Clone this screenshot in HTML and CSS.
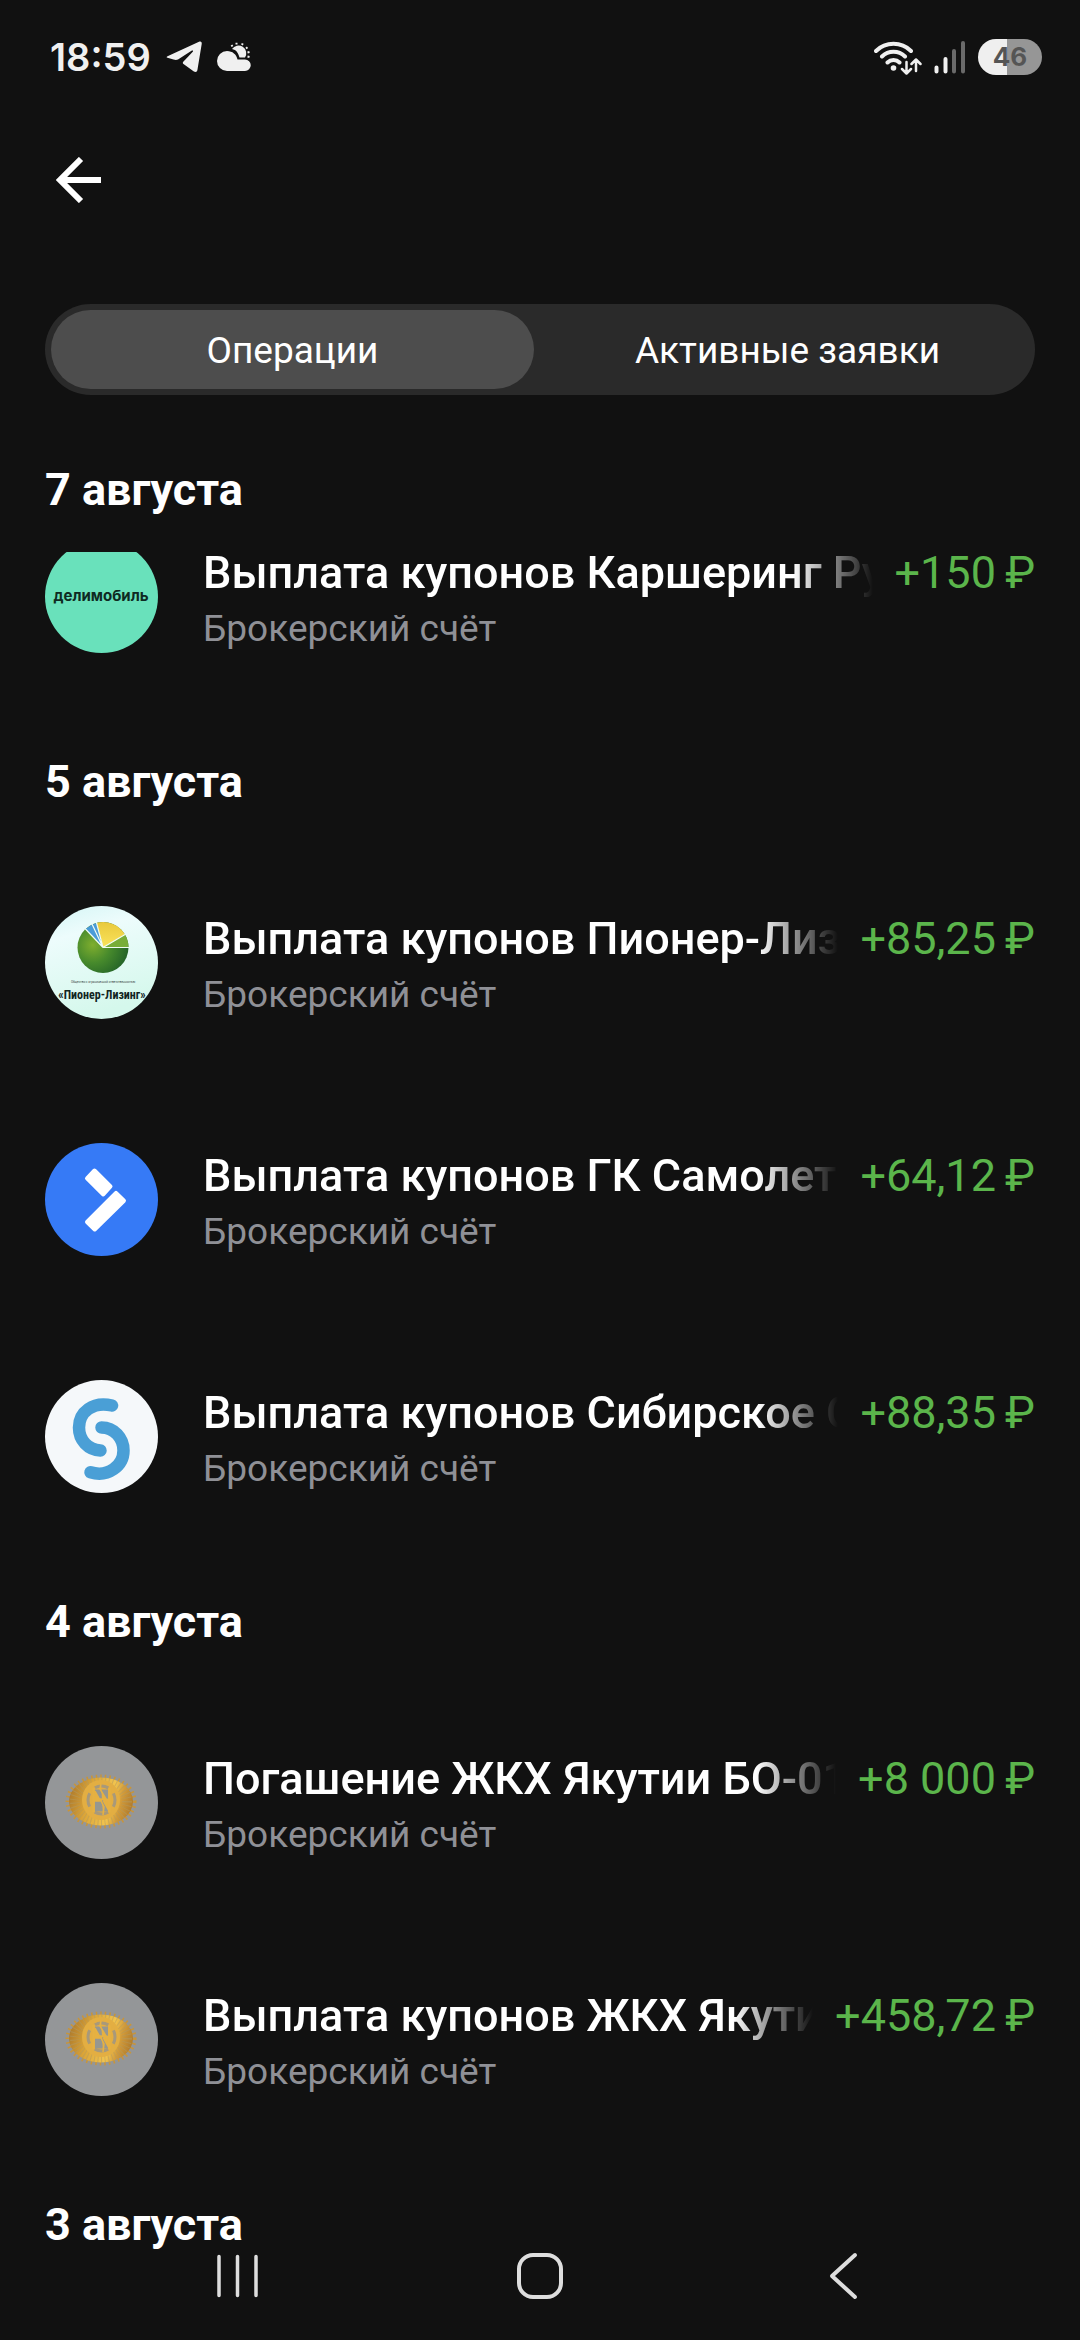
FILE: index.html
```html
<!DOCTYPE html>
<html lang="ru">
<head>
	<meta charset="utf-8">
	<meta name="viewport" content="width=device-width, initial-scale=1">
	<title>Операции</title>
	<link rel="stylesheet" href="styles.css">
</head>
<body>

	<!-- shared logo, used by two rows -->
	<svg class="defs" width="0" height="0" aria-hidden="true">
		<defs>
			<linearGradient id="gold" x1="0" y1="0.4" x2="1" y2="0.6">
				<stop offset="0" stop-color="#b07c2c"/>
				<stop offset="0.3" stop-color="#dba538"/>
				<stop offset="0.65" stop-color="#f2c44e"/>
				<stop offset="0.8" stop-color="#d29b3a"/>
				<stop offset="1" stop-color="#b07a2a"/>
			</linearGradient>
			<symbol id="logo-gkh" viewBox="0 0 113 113">
				<circle cx="56.5" cy="56.5" r="56.5" fill="#949698"/>
				<ellipse cx="56" cy="55.500" rx="33" ry="24.500" fill="none" stroke="#c8953a" stroke-width="5" stroke-dasharray="1.5 3"/>
				<ellipse cx="56" cy="55.500" rx="32" ry="24" fill="url(#gold)"/>
				<ellipse cx="56" cy="55.500" rx="26" ry="20" fill="none" stroke="#b29a62" stroke-width="10" stroke-dasharray="1 2.500" opacity="0.5"/>
				<ellipse cx="56" cy="54" rx="19" ry="20" fill="#e3ae42"/>
				<ellipse cx="56.500" cy="54" rx="13.500" ry="14" fill="none" stroke="#a8997a" stroke-width="3" stroke-dasharray="14 7.500" stroke-dashoffset="7"/>
				<path d="M50 43.500h13v22H50z" fill="#969790"/>
				<path d="M56 37.500 55 43l6 10 3 1-9-1 4 8-1 8M50 55h5.500l-5.500-10zM63.500 54v10l-5-9z" fill="#e6b142" stroke="#e6b142" stroke-width="1.500"/>
				<path d="M48.500 42v24M64.500 42v24" fill="none" stroke="#e6b142" stroke-width="2"/>
			</symbol>
		</defs>
	</svg>

	<div class="status-bar">
		<div class="status-left">
			<span class="clock">18:59</span>
			<svg width="36" height="32" viewBox="0 0 36 32" aria-hidden="true">
				<path d="M1.500 15.200 33 .8C35 0 36 1 35.700 3L31.500 28.500C31 31.300 29.500 31.500 27.500 30.300L17.500 23C16.500 22.200 16.700 21.300 17.500 20.500L27 10.500C27.500 9.500 26.500 9.200 25.500 9.800L12 18.500C10.500 19.200 9 19 7.500 18.500L1.500 16.800C.3 16.400.4 15.700 1.500 15.200z" fill="#f0f0f0"/>
			</svg>
			<svg width="34" height="30" viewBox="0 0 34 30" aria-hidden="true">
				<path d="M15 7a7.500 7.500 0 0 1 13 8.500h-5.500C21 10.500 19.500 8 15 7z" fill="#f0f0f0"/>
				<path d="M15.500 4.500l-1-1.500M19.500 2.500V.8M25 3l.7-1.600M29 6.500l1.500-1.200M30.500 10.500l2-.5M30.500 14.500l2 .5" stroke="#f0f0f0" stroke-width="2"/>
				<path d="M10 9c5.500 0 9.500 3.500 10.500 8.500H28a5.500 5.500 0 0 1 0 11.500H10A10 10 0 0 1 10 9z" fill="#f0f0f0"/>
			</svg>
		</div>
		<div class="status-right">
			<svg width="48" height="36" viewBox="0 0 48 36" fill="none" stroke="#f0f0f0" stroke-linecap="round" stroke-linejoin="round" aria-hidden="true">
				<path d="M2 12a25 25 0 0 1 35 0M8 17.500a16.500 16.500 0 0 1 23 0M13.500 23.500a8.500 8.500 0 0 1 12 0" stroke-width="4"/>
				<circle cx="19.500" cy="29" r="2.800" fill="#f0f0f0" stroke="none"/>
				<path d="M32.500 23v11M28 30l4.500 4.500 4.500-4.500M42 32V21M37.500 25l4.500-4.500 4.500 4.500" stroke-width="2.500"/>
			</svg>
			<svg width="32" height="36" viewBox="0 0 32 36" stroke-width="4" stroke-linecap="round" aria-hidden="true">
				<path d="M2.500 28.500v4M11.500 20v12.500" stroke="#f0f0f0"/>
				<path d="M20 12v20.500M29 4v28.500" stroke="#6a6a6a"/>
			</svg>
			<span class="battery">46</span>
		</div>
	</div>

	<header class="top-bar">
		<button class="back-button" aria-label="Назад">
			<svg width="46" height="46" viewBox="0 0 46 46" fill="none" stroke="#fff" stroke-width="6" aria-hidden="true">
				<path d="M45 23H5M25 2 4 23l21 21"/>
			</svg>
		</button>
	</header>

	<div class="tabs" role="tablist">
		<button class="tab active" role="tab" aria-selected="true">Операции</button>
		<button class="tab" role="tab" aria-selected="false">Активные заявки</button>
	</div>

	<main class="operations">
		<section>
			<h2 class="date pinned">7 августа</h2>
			<ul class="list scrolled">
				<li class="row">
					<svg class="logo" viewBox="0 0 113 113" aria-hidden="true">
						<circle cx="56.5" cy="56.5" r="56.5" fill="#69e1bb"/>
						<text x="56" y="61" text-anchor="middle" class="logo-deli">делимобиль</text>
					</svg>
					<div class="info">
						<div class="line">
							<span class="title">Выплата купонов Каршеринг Ру</span>
							<span class="amount">+150&#8201;₽</span>
						</div>
						<span class="account">Брокерский счёт</span>
					</div>
				</li>
			</ul>
		</section>

		<section>
			<h2 class="date">5 августа</h2>
			<ul class="list">
				<li class="row">
					<svg class="logo" viewBox="0 0 113 113" aria-hidden="true">
						<defs>
							<linearGradient id="sky" x1="0" y1="0" x2="0.3" y2="1">
								<stop offset="0" stop-color="#d3f5f5"/>
								<stop offset="0.3" stop-color="#edfcfc"/>
								<stop offset="1" stop-color="#d5f8ec"/>
							</linearGradient>
							<radialGradient id="leaf" cx="0.3" cy="0.45" r="0.7">
								<stop offset="0" stop-color="#7fae2e"/>
								<stop offset="0.5" stop-color="#478a2c"/>
								<stop offset="1" stop-color="#246428"/>
							</radialGradient>
							<linearGradient id="sun" x1="0" y1="0" x2="0" y2="1">
								<stop offset="0" stop-color="#e9c93c"/>
								<stop offset="1" stop-color="#fae35c"/>
							</linearGradient>
							<clipPath id="round"><circle cx="56.5" cy="56.5" r="56.5"/></clipPath>
						</defs>
						<g clip-path="url(#round)">
							<path d="M0 0h113v113H0z" fill="url(#sky)"/>
							<circle cx="58" cy="41.500" r="25.500" fill="url(#leaf)"/>
							<path d="M58 41.500 80 28.500A25.500 25.500 0 0 1 83.500 41.500z" fill="#78ad38"/>
							<path d="M58 41.500 51.500 17A25.500 25.500 0 0 1 80 28.500z" fill="url(#sun)"/>
							<path d="M58 41.500 40.500 23A25.500 25.500 0 0 1 51.500 17z" fill="#4a9bd8"/>
							<path d="M40 22.500 58 41.500 51.300 16M58 41.500 47 18M58 41.500 80.500 28.200M58 41.500H84" fill="none" stroke="#effcf4" stroke-width="1.200"/>
							<text x="58" y="77" text-anchor="middle" class="logo-pioner-small">Общество с ограниченной ответственностью</text>
							<text x="57" y="93" text-anchor="middle" class="logo-pioner">«Пионер-Лизинг»</text>
						</g>
					</svg>
					<div class="info">
						<div class="line">
							<span class="title">Выплата купонов Пионер-Лиз</span>
							<span class="amount">+85,25&#8201;₽</span>
						</div>
						<span class="account">Брокерский счёт</span>
					</div>
				</li>
				<li class="row">
					<svg class="logo" viewBox="0 0 113 113" aria-hidden="true">
						<circle cx="56.5" cy="56.5" r="56.5" fill="#367af6"/>
						<g fill="#fff" stroke="#fff" stroke-width="4" stroke-linejoin="round">
							<path d="M49.500 27.500 65.500 43.500 58.300 51.500 42 35.300z"/>
							<path d="M71 49.800 79 57.700 49.700 86.500 42 79z"/>
						</g>
					</svg>
					<div class="info">
						<div class="line">
							<span class="title">Выплата купонов ГК Самолет</span>
							<span class="amount">+64,12&#8201;₽</span>
						</div>
						<span class="account">Брокерский счёт</span>
					</div>
				</li>
				<li class="row">
					<svg class="logo" viewBox="0 0 113 113" aria-hidden="true">
						<circle cx="56.5" cy="56.5" r="56.5" fill="#f5f8fa"/>
						<path d="M67 25.500C48 21 34 32 34 47.500 34 60 43 70 55.500 70.500M56.500 47.500C69 47.500 78.500 58 78.500 70.500 78.500 86 63 97.500 45.500 92.300" fill="none" stroke="#4a9fd6" stroke-width="12.500" stroke-linecap="round"/>
					</svg>
					<div class="info">
						<div class="line">
							<span class="title">Выплата купонов Сибирское С</span>
							<span class="amount">+88,35&#8201;₽</span>
						</div>
						<span class="account">Брокерский счёт</span>
					</div>
				</li>
			</ul>
		</section>

		<section>
			<h2 class="date">4 августа</h2>
			<ul class="list">
				<li class="row">
					<svg class="logo" aria-hidden="true"><use href="#logo-gkh"/></svg>
					<div class="info">
						<div class="line">
							<span class="title">Погашение ЖКХ Якутии БО-01</span>
							<span class="amount">+8 000&#8201;₽</span>
						</div>
						<span class="account">Брокерский счёт</span>
					</div>
				</li>
				<li class="row">
					<svg class="logo" aria-hidden="true"><use href="#logo-gkh"/></svg>
					<div class="info">
						<div class="line">
							<span class="title">Выплата купонов ЖКХ Якути</span>
							<span class="amount">+458,72&#8201;₽</span>
						</div>
						<span class="account">Брокерский счёт</span>
					</div>
				</li>
			</ul>
		</section>

		<section>
			<h2 class="date">3 августа</h2>
		</section>
	</main>

	<nav class="system-nav">
		<button aria-label="Недавние">
			<svg width="46" height="48" viewBox="0 0 46 48" fill="none" stroke="#dedede" stroke-width="3.5" stroke-linecap="round" aria-hidden="true">
				<path d="M4 4.500v39M22.500 4.500v39M41 4.500v39"/>
			</svg>
		</button>
		<button aria-label="Домой">
			<svg width="48" height="48" viewBox="0 0 48 48" fill="none" stroke="#dedede" stroke-width="4" aria-hidden="true">
				<rect x="3" y="3" width="42" height="42" rx="14"/>
			</svg>
		</button>
		<button aria-label="Назад">
			<svg width="32" height="48" viewBox="0 0 32 48" fill="none" stroke="#dedede" stroke-width="4" stroke-linecap="round" stroke-linejoin="round" aria-hidden="true">
				<path d="M29 3 6 24l23 21"/>
			</svg>
		</button>
	</nav>

</body>
</html>
```
FILE: styles.css
```css
* {
    box-sizing: border-box;
}
body {
    margin: 0;
    min-height: 100vh;
    background-color: #111111;
    color: #FFFFFF;
    font-family: Roboto, "Noto Sans", sans-serif;
    font-size: 45px;
    line-height: 53px;
}
button {
    padding: 0;
    border: none;
    background: none;
    color: inherit;
    font: inherit;
    cursor: pointer;
}
svg {
    display: block;
    flex: none;
}
.defs {
    position: absolute;
}

/* status bar */
.status-bar {
    display: flex;
    justify-content: space-between;
    align-items: center;
    height: 114px;
    padding: 0 38px 0 50px;
}
.status-left,
.status-right {
    display: flex;
    align-items: center;
}
.status-left {
    gap: 15px;
}
.status-right {
    gap: 12px;
}
.clock {
    color: #F0F0F0;
    font-family: Inter, sans-serif;
    font-size: 38px;
    font-weight: 600;
}
.battery {
    width: 64px;
    height: 36px;
    border-radius: 18px;
    background: linear-gradient(to right, #EFEFEF 46%, #969696 46%);
    color: #555555;
    font-family: Inter, sans-serif;
    font-size: 26px;
    font-weight: 700;
    line-height: 36px;
    text-align: center;
}

/* header and tabs */
.top-bar {
    display: flex;
    align-items: center;
    height: 132px;
    padding: 0 56px;
}
.tabs {
    display: grid;
    grid-template-columns: 1fr 1fr;
    gap: 12px;
    margin: 58px 45px 28px;
    padding: 6px;
    border-radius: 46px;
    background-color: #2A2A2A;
}
.tab {
    height: 79px;
    padding-top: 2px;
    border-radius: 40px;
    font-size: 37px;
}
.tab.active {
    background-color: #4D4D4D;
}

/* operations */
.date {
    margin: 0;
    padding: 40px 45px 36px;
    font-size: 45px;
    font-weight: 700;
}
.date.pinned {
    position: sticky;
    top: 0;
    z-index: 1;
    background-color: #111111;
}
.list {
    margin: 0;
    padding: 0;
    list-style: none;
}
/* first list is scrolled a little under its pinned date */
.list.scrolled {
    margin-top: -74px;
}
.row {
    display: flex;
    gap: 45px;
    padding: 62px 45px;
}
.logo {
    width: 113px;
    height: 113px;
}
.info {
    flex: 1;
    min-width: 0;
    padding-top: 6px;
}
.line {
    display: flex;
    gap: 22px;
}
.title {
    flex: 1;
    min-width: 0;
    overflow: hidden;
    white-space: nowrap;
    font-weight: 500;
    -webkit-mask-image: linear-gradient(to left, transparent, #000 80px);
    mask-image: linear-gradient(to left, transparent, #000 80px);
}
.amount {
    flex: none;
    color: #5BB54B;
    white-space: nowrap;
}
.account {
    display: block;
    margin-top: 6px;
    color: #8F9096;
    font-size: 37px;
    line-height: 48px;
}
.logo-deli {
    fill: #0E2A22;
    font-family: Inter, sans-serif;
    font-size: 15px;
    font-weight: 700;
}
.logo-pioner {
    fill: #12241F;
    font-family: "Roboto Condensed", Roboto, sans-serif;
    font-size: 12px;
    font-weight: 700;
}
.logo-pioner-small {
    fill: #3C4A48;
    font-size: 3px;
}

/* system buttons lie over the list */
.system-nav {
    position: fixed;
    right: 0;
    bottom: 0;
    left: 0;
    z-index: 2;
    display: flex;
    justify-content: center;
    height: 128px;
}
.system-nav button {
    display: flex;
    justify-content: center;
    align-items: center;
    width: 28%;
}
```
